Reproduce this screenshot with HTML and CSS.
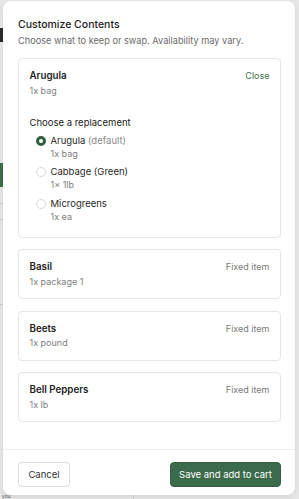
FILE: index.html
```html
<!DOCTYPE html>
<html lang="en">
<head>
<meta charset="utf-8">
<title>Customize Contents</title>
<link rel="stylesheet" href="styles.css">
</head>
<body>
<div class="backdrop" aria-hidden="true">
  <span class="bd bd-dark"></span>
  <span class="bd bd-green"></span>
  <span class="bd bd-line bd-l1"></span>
  <span class="bd bd-line bd-l2"></span>
  <span class="bd bd-line bd-l3"></span>
  <span class="bd bd-vline"></span>
  <span class="bd bd-text">you</span>
</div>
<div class="overlay">
  <div class="modal" role="dialog" aria-labelledby="ttl">
    <div class="body">
      <h1 id="ttl" class="title">Customize Contents</h1>
      <p class="subtitle">Choose what to keep or swap. Availability may vary.</p>

      <div class="card">
        <div class="card-head">
          <span class="item-name">Arugula</span>
          <a class="close" href="#">Close</a>
        </div>
        <div class="qty">1x bag</div>

        <div class="replace">
          <div class="replace-label">Choose a replacement</div>
          <ul class="options">
            <li class="option">
              <span class="radio checked"></span>
              <div>
                <div class="opt-name">Arugula <span class="muted">(default)</span></div>
                <div class="qty">1x bag</div>
              </div>
            </li>
            <li class="option">
              <span class="radio"></span>
              <div>
                <div class="opt-name">Cabbage (Green)</div>
                <div class="qty">1× 1lb</div>
              </div>
            </li>
            <li class="option">
              <span class="radio"></span>
              <div>
                <div class="opt-name">Microgreens</div>
                <div class="qty">1x ea</div>
              </div>
            </li>
          </ul>
        </div>
      </div>

      <div class="card">
        <div class="card-head">
          <span class="item-name">Basil</span>
          <span class="fixed">Fixed item</span>
        </div>
        <div class="qty">1x package 1</div>
      </div>

      <div class="card">
        <div class="card-head">
          <span class="item-name">Beets</span>
          <span class="fixed">Fixed item</span>
        </div>
        <div class="qty">1x pound</div>
      </div>

      <div class="card">
        <div class="card-head">
          <span class="item-name">Bell Peppers</span>
          <span class="fixed">Fixed item</span>
        </div>
        <div class="qty">1x lb</div>
      </div>
    </div>
    <div class="footer">
      <button class="btn btn-cancel">Cancel</button>
      <button class="btn btn-save">Save and add to cart</button>
    </div>
  </div>
</div>
</body>
</html>
```

FILE: styles.css
```css
* { box-sizing: border-box; }

html, body {
  margin: 0;
  padding: 0;
}

body {
  width: 299px;
  height: 499px;
  overflow: hidden;
  background: #e7e7e7;
  font-family: Inter, "Noto Sans", sans-serif;
  color: #1f1f1f;
  position: relative;
}

.backdrop {
  position: absolute;
  inset: 0;
}

.bd { position: absolute; display: block; }
.bd-dark { left: 0; top: 28px; width: 3px; height: 14px; background: #2a2a2a; }
.bd-green { left: 0; top: 163px; width: 3px; height: 24px; background: #3d6e4b; }
.bd-line { left: 0; width: 3px; height: 1px; background: #cfcfcf; }
.bd-l1 { top: 203px; }
.bd-l2 { top: 219px; }
.bd-l3 { top: 304px; }
.bd-vline { left: 133px; top: 494px; width: 1px; height: 5px; background: #cfcfcf; }
.bd-text { left: 2px; top: 494px; font-size: 5px; line-height: 5px; color: #555; }

.overlay {
  position: absolute;
  inset: 0;
  padding: 1px 4px 4px 3px;
}

.modal {
  width: 292px;
  height: 494px;
  background: #fff;
  border-radius: 8px;
  box-shadow: 0 2px 6px rgba(0, 0, 0, 0.08);
  display: flex;
  flex-direction: column;
  overflow: hidden;
}

.body {
  flex: 1;
  padding: 16.5px 14px 0 15px;
  display: flex;
  flex-direction: column;
}

.title {
  margin: 0;
  font-size: 10.5px;
  line-height: 14px;
  font-weight: 500;
  color: #222;
}

.subtitle {
  margin: 3.5px 0 11px;
  font-size: 9.2px;
  line-height: 12px;
  color: #6b6b6b;
}

.card {
  border: 1px solid #e6e6e6;
  border-radius: 4px;
  padding: 10px 10.5px 10.5px;
  margin-bottom: 11.5px;
}

.card-head {
  display: flex;
  justify-content: space-between;
  align-items: baseline;
  line-height: 13px;
  margin-bottom: 2.5px;
}

.item-name {
  font-size: 9.75px;
  font-weight: 600;
  color: #222;
}

.close {
  font-size: 9px;
  color: #3b7048;
  text-decoration: none;
}

.fixed {
  font-size: 9px;
  color: #7a7a7a;
}

.qty {
  font-size: 9px;
  line-height: 12px;
  color: #808080;
}

.replace {
  margin-top: 19px;
  padding-bottom: 3.5px;
}

.replace-label {
  font-size: 9.5px;
  line-height: 13px;
  color: #222;
  margin-bottom: 5px;
}

.options {
  list-style: none;
  margin: 0;
  padding: 0 0 0 6px;
  display: flex;
  flex-direction: column;
  gap: 5.5px;
}

.option {
  display: flex;
  align-items: flex-start;
  gap: 5px;
}

.opt-name {
  font-size: 9.5px;
  line-height: 14px;
  color: #2a2a2a;
}

.muted { color: #8a8a8a; }

.radio {
  flex: none;
  width: 10px;
  height: 10px;
  margin-top: 2px;
  border-radius: 50%;
  border: 1px solid #dadada;
  background: #fff;
}

.radio.checked {
  border: 3px solid #2f6040;
  background: #fff;
}

.footer {
  border-top: 1px solid #eeeeee;
  padding: 11.5px 14px 8.5px 15px;
  display: flex;
  justify-content: space-between;
  align-items: center;
}

.btn {
  height: 25px;
  border-radius: 4px;
  font-family: Inter, "Noto Sans", sans-serif;
  font-size: 9.5px;
  cursor: pointer;
}

.btn-cancel {
  background: #fff;
  border: 1px solid #dcdcdc;
  color: #333;
  width: 52px;
  padding: 0;
}

.btn-save {
  background: #3b6b4a;
  border: 1px solid #355f42;
  color: #fff;
  width: 111px;
  padding: 0;
}
```
